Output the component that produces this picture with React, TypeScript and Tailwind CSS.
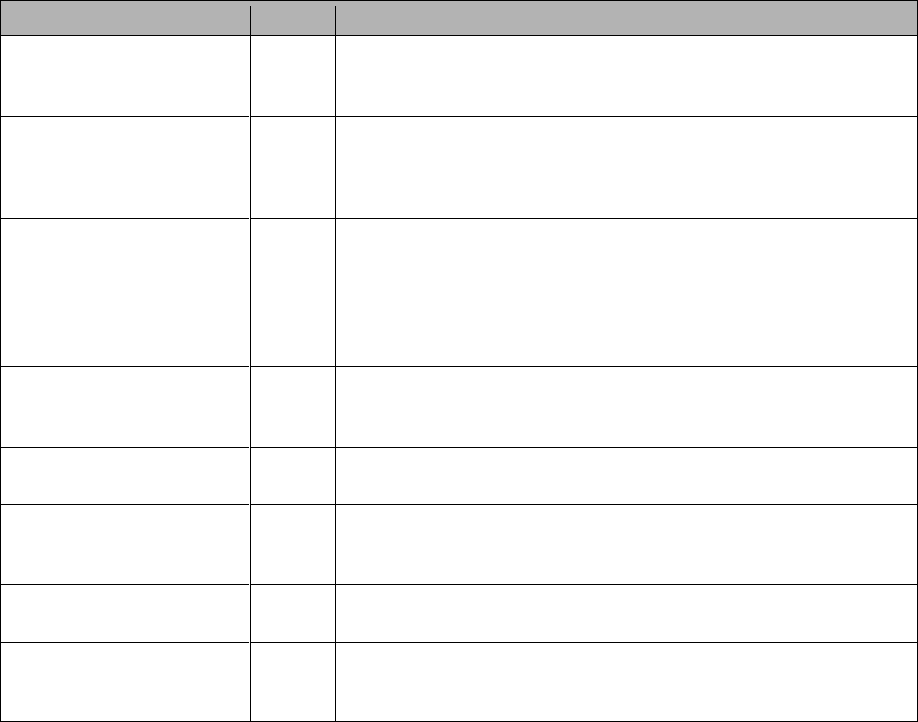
import React from 'react';

// row heights incl. bottom rule, measured from the reference
const rowHeights = [81, 102, 148, 81, 57, 80, 58, 78];

const rowClass: Record<number, string> = {
    81: 'h-[81px]',
    102: 'h-[102px]',
    148: 'h-[148px]',
    57: 'h-[57px]',
    80: 'h-[80px]',
    58: 'h-[58px]',
    78: 'h-[78px]',
};

const HeaderRow: React.FC = () => (
    <div className="flex h-[35px] bg-[#b3b3b3] border-b border-black">
        <div className="w-[249px] flex-none" />
        <div className="w-[85px] flex-none flex flex-col">
            <div className="h-[5px] flex-none" />
            <div className="flex-1 border-l border-black" />
        </div>
        <div className="flex-1 flex flex-col">
            <div className="h-[5px] flex-none" />
            <div className="flex-1 border-l border-black" />
        </div>
    </div>
);

const BodyRow: React.FC<{ height: number; last: boolean }> = ({ height, last }) => (
    <div className={`flex ${rowClass[height]}`}>
        <div className="w-[249px] flex-none flex">
            <div className={`w-[248px] flex-none ${last ? '' : 'border-b border-black'}`} />
        </div>
        <div className={`w-[85px] flex-none border-l border-black ${last ? '' : 'border-b'}`} />
        <div className={`flex-1 border-l border-black ${last ? '' : 'border-b'}`} />
    </div>
);

export default function App() {
    return (
        <div className="w-[918px] h-[722px] bg-white font-['Liberation_Sans',sans-serif]">
            <div className="w-[918px] border border-black">
                <HeaderRow />
                {rowHeights.map((h, i) => (
                    <BodyRow key={i} height={h} last={i === rowHeights.length - 1} />
                ))}
            </div>
        </div>
    );
}
